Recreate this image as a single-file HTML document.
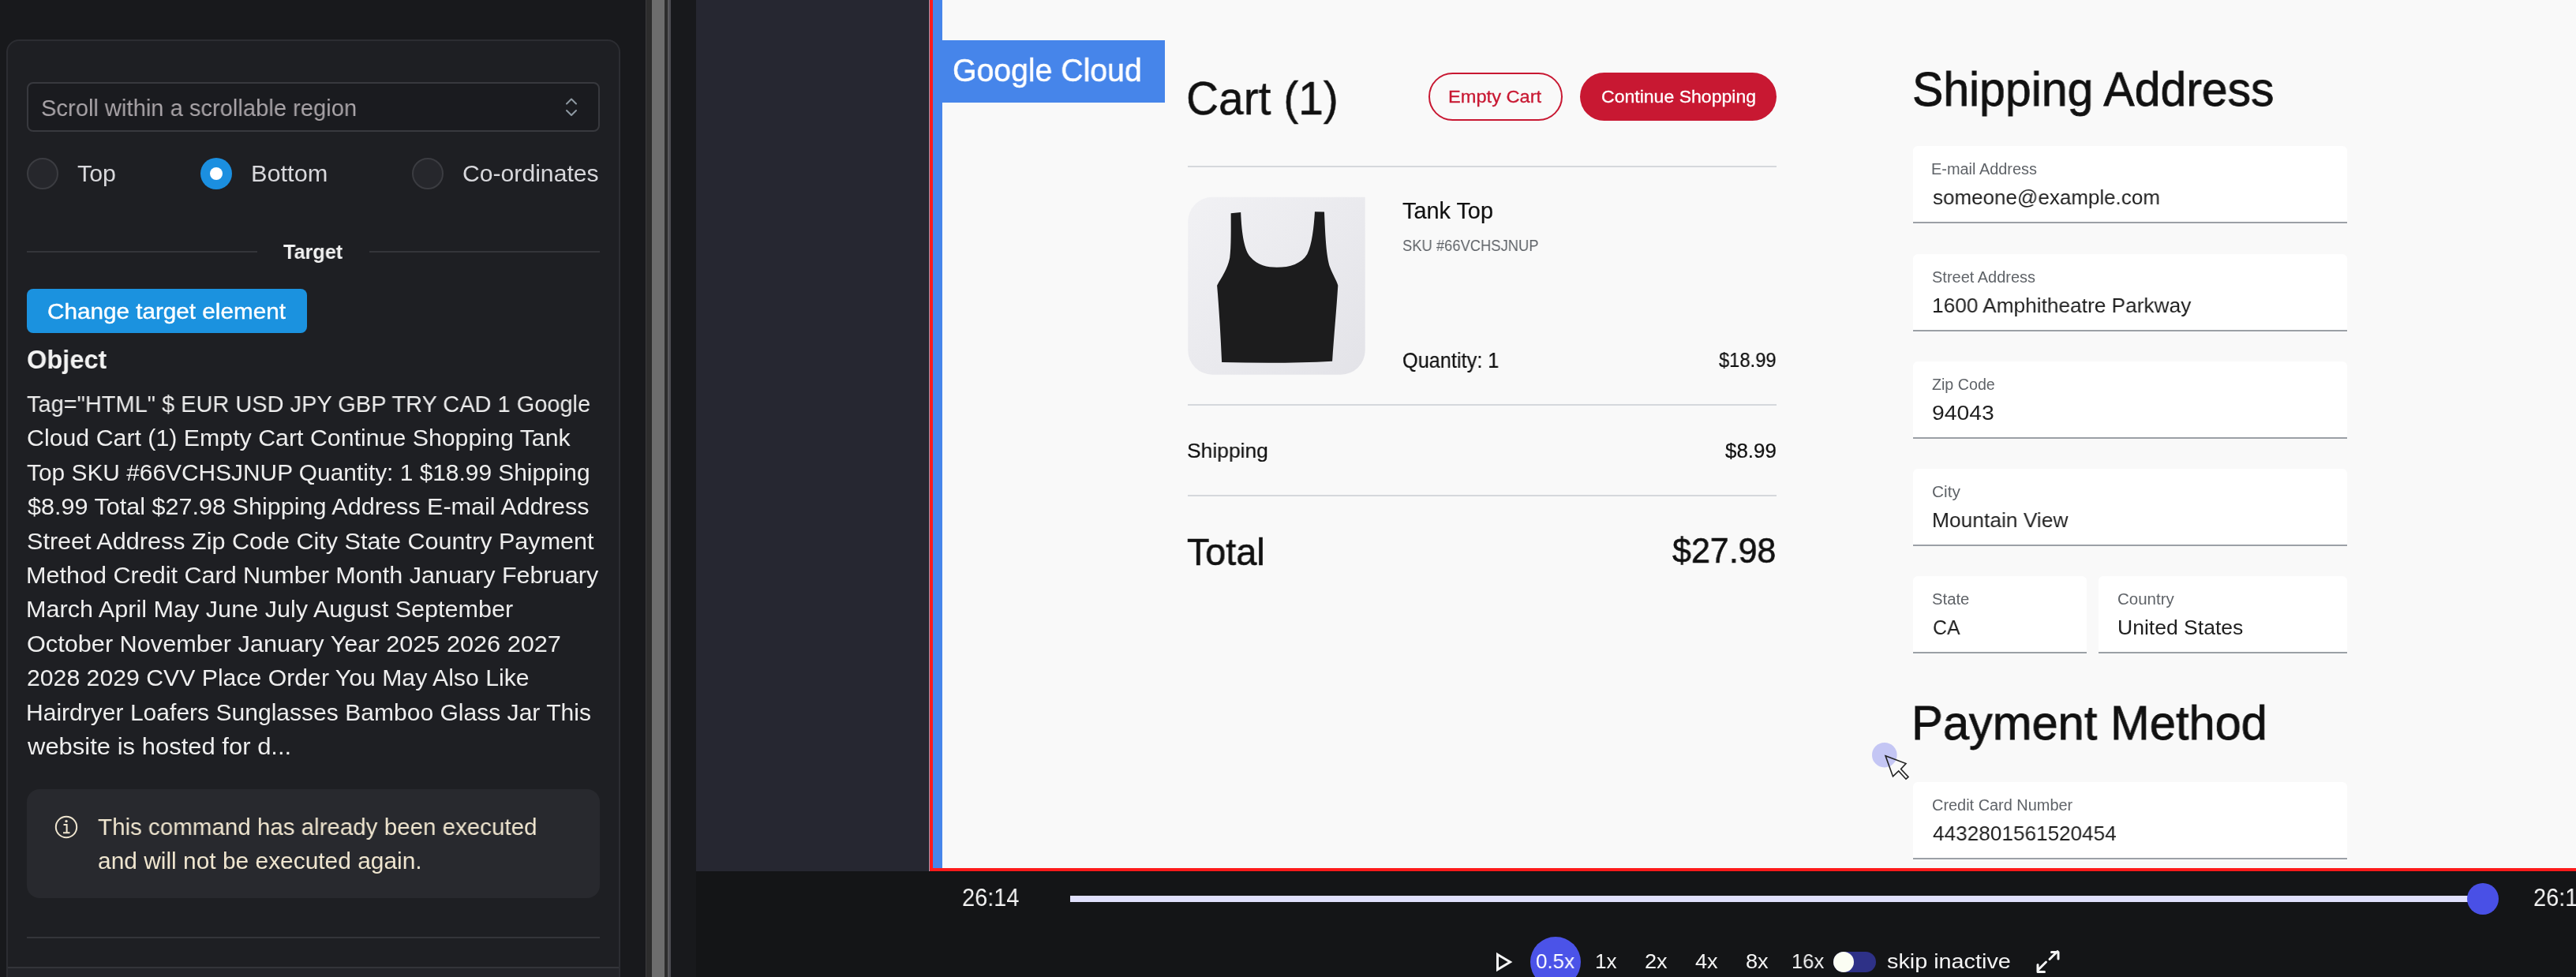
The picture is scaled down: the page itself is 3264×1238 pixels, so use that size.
<!DOCTYPE html>
<html><head><meta charset="utf-8"><style>
html,body{margin:0;padding:0;}
body{width:3264px;height:1238px;overflow:hidden;position:relative;background:#18191c;font-family:'Liberation Sans', sans-serif;}
body>div,body>svg{position:absolute;}
.t{white-space:nowrap;transform-origin:0 0;will-change:transform;}
</style></head><body>
<div style="left:8px;top:50px;width:778px;height:1200px;box-sizing:border-box;border:2px solid #2c2d32;border-radius:16px 16px 0 0;background:#1e1f23"></div>
<div style="left:10px;top:1225px;width:774px;height:2px;background:#333439;"></div>
<div style="left:10px;top:1227px;width:774px;height:11px;background:#232429;"></div>
<div style="left:34px;top:104px;width:726px;height:63px;box-sizing:border-box;border:2px solid #38393e;border-radius:8px;background:#1a1b1f"></div>
<svg style="left:712px;top:120px" width="24" height="32" viewBox="0 0 24 32"><path d="M6 11.5 L12 5.5 L18 11.5 M6 20 L12 26 L18 20" fill="none" stroke="#8e99a2" stroke-width="2" stroke-linecap="round" stroke-linejoin="round"/></svg>
<div class="t" style="left:52.03px;top:122.00px;font-size:30.1px;line-height:30.1px;font-weight:400;color:#a9a4a8;transform:scaleX(0.9684);">Scroll within a scrollable region</div>
<div style="left:34px;top:200px;width:40px;height:40px;box-sizing:border-box;border-radius:50%;border:2px solid #3b3c41;background:#26272c"></div>
<div style="left:522px;top:200px;width:40px;height:40px;box-sizing:border-box;border-radius:50%;border:2px solid #3b3c41;background:#26272c"></div>
<div style="left:254px;top:200px;width:40px;height:40px;border-radius:50%;background:#1b8fe0"></div>
<div style="left:266px;top:212px;width:16px;height:16px;border-radius:50%;background:#ffffff"></div>
<div class="t" style="left:97.96px;top:206.00px;font-size:29.1px;line-height:29.1px;font-weight:400;color:#d8d8dc;transform:scaleX(1.0444);">Top</div>
<div class="t" style="left:317.89px;top:206.00px;font-size:29.1px;line-height:29.1px;font-weight:400;color:#d8d8dc;transform:scaleX(1.0562);">Bottom</div>
<div class="t" style="left:586.46px;top:206.00px;font-size:29.1px;line-height:29.1px;font-weight:400;color:#d8d8dc;transform:scaleX(1.0364);">Co-ordinates</div>
<div style="left:34px;top:318px;width:292px;height:2px;background:#34353a;"></div>
<div style="left:468px;top:318px;width:292px;height:2px;background:#34353a;"></div>
<div class="t" style="left:359.00px;top:306.50px;font-size:25.9px;line-height:25.9px;font-weight:700;color:#f2f2f2;transform:scaleX(0.9740);">Target</div>
<div style="left:34px;top:366px;width:355px;height:56px;border-radius:8px;background:#1b92df"></div>
<div class="t" style="left:59.95px;top:380.00px;font-size:28.3px;line-height:28.3px;font-weight:400;color:#ffffff;transform:scaleX(1.0488);-webkit-text-stroke:0.4px #ffffff;">Change target element</div>
<div class="t" style="left:34.02px;top:439.00px;font-size:33.4px;line-height:33.4px;font-weight:700;color:#f2f2f2;transform:scaleX(0.9757);">Object</div>
<div class="t" style="left:34.02px;top:497.00px;font-size:29.5px;line-height:29.5px;font-weight:400;color:#eeeeee;transform:scaleX(0.9818);">Tag="HTML" $ EUR USD JPY GBP TRY CAD 1 Google</div>
<div class="t" style="left:33.97px;top:540.40px;font-size:29.5px;line-height:29.5px;font-weight:400;color:#eeeeee;transform:scaleX(1.0278);">Cloud Cart (1) Empty Cart Continue Shopping Tank</div>
<div class="t" style="left:33.99px;top:583.80px;font-size:29.5px;line-height:29.5px;font-weight:400;color:#eeeeee;transform:scaleX(1.0128);">Top SKU #66VCHSJNUP Quantity: 1 $18.99 Shipping</div>
<div class="t" style="left:35.00px;top:627.20px;font-size:29.5px;line-height:29.5px;font-weight:400;color:#eeeeee;transform:scaleX(1.0364);">$8.99 Total $27.98 Shipping Address E-mail Address</div>
<div class="t" style="left:33.96px;top:670.60px;font-size:29.5px;line-height:29.5px;font-weight:400;color:#eeeeee;transform:scaleX(1.0361);">Street Address Zip Code City State Country Payment</div>
<div class="t" style="left:32.93px;top:714.00px;font-size:29.5px;line-height:29.5px;font-weight:400;color:#eeeeee;transform:scaleX(1.0358);">Method Credit Card Number Month January February</div>
<div class="t" style="left:32.93px;top:757.40px;font-size:29.5px;line-height:29.5px;font-weight:400;color:#eeeeee;transform:scaleX(1.0371);">March April May June July August September</div>
<div class="t" style="left:33.96px;top:800.80px;font-size:29.5px;line-height:29.5px;font-weight:400;color:#eeeeee;transform:scaleX(1.0396);">October November January Year 2025 2026 2027</div>
<div class="t" style="left:33.98px;top:844.20px;font-size:29.5px;line-height:29.5px;font-weight:400;color:#eeeeee;transform:scaleX(1.0242);">2028 2029 CVV Place Order You May Also Like</div>
<div class="t" style="left:32.96px;top:887.60px;font-size:29.5px;line-height:29.5px;font-weight:400;color:#eeeeee;transform:scaleX(1.0186);">Hairdryer Loafers Sunglasses Bamboo Glass Jar This</div>
<div class="t" style="left:35.00px;top:931.00px;font-size:29.5px;line-height:29.5px;font-weight:400;color:#eeeeee;transform:scaleX(1.0506);">website is hosted for d...</div>
<div style="left:34px;top:1000px;width:726px;height:138px;border-radius:16px;background:#28292e"></div>
<svg style="left:68px;top:1032px" width="32" height="32" viewBox="0 0 32 32"><circle cx="16" cy="16" r="13.2" fill="none" stroke="#efe5cf" stroke-width="2"/><circle cx="16" cy="8.6" r="1.7" fill="#efe5cf"/><path d="M12.5 13 H16.6 V23 M12 23.2 H20.5" fill="none" stroke="#efe5cf" stroke-width="2"/></svg>
<div class="t" style="left:124.01px;top:1033.00px;font-size:29.7px;line-height:29.7px;font-weight:400;color:#efe5cf;transform:scaleX(0.9946);">This command has already been executed</div>
<div class="t" style="left:123.99px;top:1076.00px;font-size:29.7px;line-height:29.7px;font-weight:400;color:#efe5cf;transform:scaleX(1.0074);">and will not be executed again.</div>
<div style="left:34px;top:1187px;width:726px;height:2px;background:#34353a;"></div>
<div style="left:818px;top:0px;width:8px;height:1238px;background:#2d2d2d;"></div>
<div style="left:818px;top:0px;width:1px;height:1238px;background:#3c3c3e;"></div>
<div style="left:826px;top:0px;width:16px;height:1238px;background:#6d6d6d;"></div>
<div style="left:842px;top:0px;width:4px;height:1238px;background:#2d2d2d;"></div>
<div style="left:846px;top:0px;width:2px;height:1238px;background:#58585b;"></div>
<div style="left:848px;top:0px;width:2px;height:1238px;background:#4a4a50;"></div>
<div style="left:882px;top:0px;width:295px;height:1104px;background:#262731;"></div>
<div style="left:1176px;top:0px;width:1px;height:1104px;background:#1f2027;"></div>
<div style="left:1177px;top:0px;width:1px;height:1104px;background:#9f9ab5;"></div>
<div style="left:1178px;top:0px;width:4px;height:1104px;background:#fd1b1b;"></div>
<div style="left:1182px;top:0px;width:2082px;height:1100px;background:#f9f9f9;"></div>
<div style="left:1182px;top:1100px;width:2082px;height:4px;background:#fd1b1b;"></div>
<div style="left:1177px;top:1104px;width:2087px;height:1px;background:#081214;"></div>
<div style="left:1182px;top:0px;width:12px;height:1100px;background:#4685ea;"></div>
<div style="left:1182px;top:51px;width:294px;height:79px;background:#4685ea;"></div>
<div class="t" style="left:1207.07px;top:69.20px;font-size:40.7px;line-height:40.7px;font-weight:400;color:#ffffff;transform:scaleX(0.9631);-webkit-text-stroke:0.5px #ffffff;">Google Cloud</div>
<div class="t" style="left:1503.14px;top:95.30px;font-size:59.6px;line-height:59.6px;font-weight:400;color:#111111;transform:scaleX(0.9538);-webkit-text-stroke:0.5px #111111;">Cart (1)</div>
<div style="left:1810px;top:92px;width:170px;height:61px;box-sizing:border-box;border:2px solid #c81832;border-radius:31px"></div>
<div style="left:2002px;top:92px;width:249px;height:61px;border-radius:31px;background:#c81832"></div>
<div class="t" style="left:1835.40px;top:112.00px;font-size:22.5px;line-height:22.5px;font-weight:400;color:#c81832;transform:scaleX(1.0500);-webkit-text-stroke:0.3px #c81832;">Empty Cart</div>
<div class="t" style="left:2028.98px;top:112.00px;font-size:22.5px;line-height:22.5px;font-weight:400;color:#ffffff;transform:scaleX(1.0243);-webkit-text-stroke:0.3px #ffffff;">Continue Shopping</div>
<div style="left:1505px;top:210px;width:746px;height:2px;background:#d5d8dc;"></div>
<div style="left:1505px;top:512px;width:746px;height:2px;background:#d5d8dc;"></div>
<div style="left:1505px;top:627px;width:746px;height:2px;background:#d5d8dc;"></div>
<svg style="left:1500px;top:245px" width="235" height="235" viewBox="0 0 977 977">
<defs><linearGradient id="ig" x1="0" y1="0" x2="1" y2="1"><stop offset="0" stop-color="#f1f1f4"/><stop offset="1" stop-color="#e3e3e8"/></linearGradient></defs>
<path d="M22 150 A128 128 0 0 1 150 20 L955 20 L955 827 A128 128 0 0 1 827 955 L150 955 A128 128 0 0 1 22 827 Z" fill="url(#ig)"/>
<path d="M248 105 L300 100 C305 220 320 300 350 335 C390 380 440 390 490 390 C560 390 620 370 650 320 C675 270 685 180 690 97 L740 98 C745 220 750 330 770 390 C785 430 805 460 812 485 C805 600 790 760 782 885 C600 895 400 895 200 890 C195 760 185 600 175 485 C200 440 230 400 242 340 C250 280 248 180 248 105 Z" fill="#1c1c1d"/>
</svg>
<div class="t" style="left:1776.99px;top:252.70px;font-size:28.6px;line-height:28.6px;font-weight:400;color:#111111;transform:scaleX(1.0089);-webkit-text-stroke:0.2px #111111;">Tank Top</div>
<div class="t" style="left:1777.09px;top:300.50px;font-size:20.1px;line-height:20.1px;font-weight:400;color:#5f6368;transform:scaleX(0.9144);">SKU #66VCHSJNUP</div>
<div class="t" style="left:1777.06px;top:444.00px;font-size:26.9px;line-height:26.9px;font-weight:400;color:#111111;transform:scaleX(0.9414);-webkit-text-stroke:0.2px #111111;">Quantity: 1</div>
<div class="t" style="left:2178.00px;top:444.00px;font-size:25.4px;line-height:25.4px;font-weight:400;color:#111111;transform:scaleX(0.9351);-webkit-text-stroke:0.2px #111111;">$18.99</div>
<div class="t" style="left:1504.01px;top:558.30px;font-size:26.7px;line-height:26.7px;font-weight:400;color:#111111;transform:scaleX(0.9901);-webkit-text-stroke:0.2px #111111;">Shipping</div>
<div class="t" style="left:2185.70px;top:558.60px;font-size:25.4px;line-height:25.4px;font-weight:400;color:#111111;transform:scaleX(1.0206);-webkit-text-stroke:0.2px #111111;">$8.99</div>
<div class="t" style="left:1504.01px;top:675.50px;font-size:47.2px;line-height:47.2px;font-weight:400;color:#111111;transform:scaleX(0.9896);-webkit-text-stroke:0.6px #111111;">Total</div>
<div class="t" style="left:2119.03px;top:675.80px;font-size:44.3px;line-height:44.3px;font-weight:400;color:#111111;transform:scaleX(0.9699);-webkit-text-stroke:0.6px #111111;">$27.98</div>
<div class="t" style="left:2423.08px;top:82.70px;font-size:60.6px;line-height:60.6px;font-weight:400;color:#111111;transform:scaleX(0.9721);-webkit-text-stroke:0.8px #111111;">Shipping Address</div>
<div class="t" style="left:2422.08px;top:886.00px;font-size:60.6px;line-height:60.6px;font-weight:400;color:#111111;transform:scaleX(0.9844);-webkit-text-stroke:0.8px #111111;">Payment Method</div>
<div style="left:2424px;top:185px;width:550px;height:98px;box-sizing:border-box;background:#ffffff;border-radius:6px 6px 0 0;border-bottom:2px solid #9ba0a6"></div>
<div class="t" style="left:2447.46px;top:205.20px;font-size:19.5px;line-height:19.5px;font-weight:400;color:#5f6368;transform:scaleX(1.0217);">E-mail Address</div>
<div class="t" style="left:2448.52px;top:237.30px;font-size:26.5px;line-height:26.5px;font-weight:400;color:#1f1f1f;transform:scaleX(0.9808);">someone@example.com</div>
<div style="left:2424px;top:322px;width:550px;height:98px;box-sizing:border-box;background:#ffffff;border-radius:6px 6px 0 0;border-bottom:2px solid #9ba0a6"></div>
<div class="t" style="left:2448.48px;top:342.20px;font-size:19.5px;line-height:19.5px;font-weight:400;color:#5f6368;transform:scaleX(1.0246);">Street Address</div>
<div class="t" style="left:2447.52px;top:374.30px;font-size:26.5px;line-height:26.5px;font-weight:400;color:#1f1f1f;transform:scaleX(0.9903);">1600 Amphitheatre Parkway</div>
<div style="left:2424px;top:458px;width:550px;height:98px;box-sizing:border-box;background:#ffffff;border-radius:6px 6px 0 0;border-bottom:2px solid #9ba0a6"></div>
<div class="t" style="left:2448.49px;top:478.20px;font-size:19.5px;line-height:19.5px;font-weight:400;color:#5f6368;transform:scaleX(1.0078);">Zip Code</div>
<div class="t" style="left:2448.43px;top:510.30px;font-size:26.5px;line-height:26.5px;font-weight:400;color:#1f1f1f;transform:scaleX(1.0681);">94043</div>
<div style="left:2424px;top:594px;width:550px;height:98px;box-sizing:border-box;background:#ffffff;border-radius:6px 6px 0 0;border-bottom:2px solid #9ba0a6"></div>
<div class="t" style="left:2448.43px;top:614.20px;font-size:19.5px;line-height:19.5px;font-weight:400;color:#5f6368;transform:scaleX(1.0667);">City</div>
<div class="t" style="left:2447.51px;top:646.30px;font-size:26.5px;line-height:26.5px;font-weight:400;color:#1f1f1f;transform:scaleX(0.9948);">Mountain View</div>
<div style="left:2424px;top:730px;width:220px;height:98px;box-sizing:border-box;background:#ffffff;border-radius:6px 6px 0 0;border-bottom:2px solid #9ba0a6"></div>
<div class="t" style="left:2448.46px;top:750.20px;font-size:19.5px;line-height:19.5px;font-weight:400;color:#5f6368;transform:scaleX(1.0386);">State</div>
<div class="t" style="left:2448.56px;top:782.30px;font-size:26.5px;line-height:26.5px;font-weight:400;color:#1f1f1f;transform:scaleX(0.9361);">CA</div>
<div style="left:2659px;top:730px;width:315px;height:98px;box-sizing:border-box;background:#ffffff;border-radius:6px 6px 0 0;border-bottom:2px solid #9ba0a6"></div>
<div class="t" style="left:2683.45px;top:750.20px;font-size:19.5px;line-height:19.5px;font-weight:400;color:#5f6368;transform:scaleX(1.0507);">Country</div>
<div class="t" style="left:2682.50px;top:782.30px;font-size:26.5px;line-height:26.5px;font-weight:400;color:#1f1f1f;transform:scaleX(1.0019);">United States</div>
<div style="left:2424px;top:991px;width:550px;height:98px;box-sizing:border-box;background:#ffffff;border-radius:6px 6px 0 0;border-bottom:2px solid #9ba0a6"></div>
<div class="t" style="left:2448.48px;top:1011.20px;font-size:19.5px;line-height:19.5px;font-weight:400;color:#5f6368;transform:scaleX(1.0214);">Credit Card Number</div>
<div class="t" style="left:2448.51px;top:1043.30px;font-size:26.5px;line-height:26.5px;font-weight:400;color:#1f1f1f;transform:scaleX(0.9872);">4432801561520454</div>
<svg style="left:2360px;top:930px" width="70" height="70" viewBox="2360 930 70 70"><circle cx="2387.8" cy="956.7" r="15.8" fill="#c4c6f4"/><path d="M2389.1 957.8 L2415 967.5 L2408.6 974.5 L2418 984.5 L2415 987.2 L2405.7 977 L2398.5 983.9 Z" fill="none" stroke="#222" stroke-width="1.6" stroke-linejoin="miter"/></svg>
<div style="left:882px;top:1105px;width:2382px;height:133px;background:#141517;"></div>
<div style="left:882px;top:1104px;width:295px;height:1px;background:#141517;"></div>
<div style="left:1356px;top:1135px;width:1790px;height:8px;background:#e0e0fc;"></div>
<div style="left:3126px;top:1119px;width:40px;height:40px;border-radius:50%;background:#4950e6"></div>
<div class="t" style="left:1219.07px;top:1122.30px;font-size:31.0px;line-height:31.0px;font-weight:400;color:#f4f4f4;transform:scaleX(0.9342);">26:14</div>
<div class="t" style="left:3210.07px;top:1122.30px;font-size:31.0px;line-height:31.0px;font-weight:400;color:#f4f4f4;transform:scaleX(0.9342);">26:14</div>
<svg style="left:1890px;top:1200px" width="32" height="38" viewBox="0 0 32 38"><path d="M7.5 9.5 L23.5 19 L7.5 28.5 Z" fill="none" stroke="#f4f4f4" stroke-width="3"/></svg>
<div style="left:1939px;top:1187px;width:64px;height:64px;border-radius:50%;background:#4b53e8"></div>
<div class="t" style="left:1946.01px;top:1205.30px;font-size:26.2px;line-height:26.2px;font-weight:400;color:#ffffff;transform:scaleX(0.9896);">0.5x</div>
<div class="t" style="left:2021.00px;top:1205.30px;font-size:26.2px;line-height:26.2px;font-weight:400;color:#f4f4f4;transform:scaleX(1.0000);">1x</div>
<div class="t" style="left:2083.96px;top:1205.30px;font-size:26.2px;line-height:26.2px;font-weight:400;color:#f4f4f4;transform:scaleX(1.0385);">2x</div>
<div class="t" style="left:2147.96px;top:1205.30px;font-size:26.2px;line-height:26.2px;font-weight:400;color:#f4f4f4;transform:scaleX(1.0385);">4x</div>
<div class="t" style="left:2211.96px;top:1205.30px;font-size:26.2px;line-height:26.2px;font-weight:400;color:#f4f4f4;transform:scaleX(1.0385);">8x</div>
<div class="t" style="left:2270.05px;top:1205.30px;font-size:26.2px;line-height:26.2px;font-weight:400;color:#f4f4f4;transform:scaleX(0.9750);">16x</div>
<div class="t" style="left:2390.60px;top:1205.30px;font-size:26.2px;line-height:26.2px;font-weight:400;color:#f4f4f4;transform:scaleX(1.0993);">skip inactive</div>
<div style="left:2323px;top:1206px;width:54px;height:26px;border-radius:13px;background:#2e3187"></div>
<div style="left:2323px;top:1206px;width:26px;height:26px;border-radius:50%;background:#fbfdf3"></div>
<svg style="left:2576px;top:1200px" width="40" height="38" viewBox="2576 1200 40 38"><path d="M2597 1215.5 L2607 1205.5 M2599.5 1206.5 H2608 V1215 M2592.5 1219 L2582.5 1229 M2582 1222.5 V1231.5 H2590.5" fill="none" stroke="#f4f4f4" stroke-width="3" stroke-linecap="round" stroke-linejoin="round"/></svg>
</body></html>
